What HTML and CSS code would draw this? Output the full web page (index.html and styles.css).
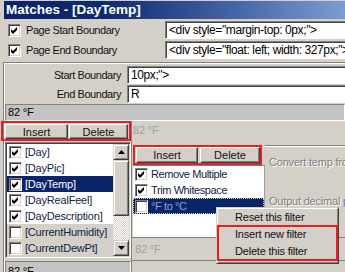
FILE: index.html
```html
<!doctype html>
<html lang="en">
  <head>
    <meta charset="utf-8" />
    <title>Matches - [DayTemp]</title>
    <link rel="stylesheet" href="styles.css">
  </head>
  <body>
    <div class="window">
      <div class="titlebar">Matches - [DayTemp]</div>

      <div class="page-rows">
        <div class="page-row">
          <span class="check"><svg width="9" height="9"><polygon points="1,3 3,5 7,1 7,4 3,8 1,6"/></svg></span>
          <span class="page-label">Page Start Boundary</span>
          <div class="field">&lt;div style="margin-top: 0px;"&gt;</div>
        </div>
        <div class="page-row">
          <span class="check"><svg width="9" height="9"><polygon points="1,3 3,5 7,1 7,4 3,8 1,6"/></svg></span>
          <span class="page-label">Page End Boundary</span>
          <div class="field">&lt;div style="float: left; width: 327px;"&gt;</div>
        </div>
      </div>

      <div class="panel">
        <div class="bound-row">
          <span class="bound-label">Start Boundary</span>
          <div class="field">10px;"&gt;</div>
        </div>
        <div class="bound-row">
          <span class="bound-label">End Boundary</span>
          <div class="field">R</div>
        </div>
        <div class="status">82 °F</div>

        <div class="lower">
          <div class="matches-col">
            <div class="btn-row mark">
              <button class="btn btn-insert">Insert</button>
              <button class="btn btn-delete">Delete</button>
            </div>
            <div class="listbox">
              <div class="list-items">
                <div class="list-row"><span class="check"><svg width="9" height="9"><polygon points="1,3 3,5 7,1 7,4 3,8 1,6"/></svg></span>[Day]</div>
                <div class="list-row"><span class="check"><svg width="9" height="9"><polygon points="1,3 3,5 7,1 7,4 3,8 1,6"/></svg></span>[DayPic]</div>
                <div class="list-row selected"><span class="check"><svg width="9" height="9"><polygon points="1,3 3,5 7,1 7,4 3,8 1,6"/></svg></span>[DayTemp]</div>
                <div class="list-row"><span class="check"><svg width="9" height="9"><polygon points="1,3 3,5 7,1 7,4 3,8 1,6"/></svg></span>[DayRealFeel]</div>
                <div class="list-row"><span class="check"><svg width="9" height="9"><polygon points="1,3 3,5 7,1 7,4 3,8 1,6"/></svg></span>[DayDescription]</div>
                <div class="list-row off"><span class="check"></span>[CurrentHumidity]</div>
                <div class="list-row off"><span class="check"></span>[CurrentDewPt]</div>
              </div>
              <div class="scrollbar">
                <div class="sb-btn"><svg width="7" height="4"><polygon points="3.5,0 7,4 0,4"/></svg></div>
                <div class="sb-thumb"></div>
                <div class="sb-track"></div>
                <div class="sb-btn"><svg width="7" height="4"><polygon points="0,0 7,0 3.5,4"/></svg></div>
              </div>
            </div>
            <div class="status status-low">82 °F</div>
          </div>

          <div class="filters-col">
            <div class="value">82 °F</div>
            <div class="filter-main">
              <div class="filter-left">
                <div class="btn-row mark">
                  <button class="btn btn-insert2">Insert</button>
                  <button class="btn btn-delete2">Delete</button>
                </div>
                <div class="filter-list">
                  <div class="list-row"><span class="check"><svg width="9" height="9"><polygon points="1,3 3,5 7,1 7,4 3,8 1,6"/></svg></span>Remove Multiple</div>
                  <div class="list-row"><span class="check"><svg width="9" height="9"><polygon points="1,3 3,5 7,1 7,4 3,8 1,6"/></svg></span>Trim Whitespace</div>
                  <div class="list-row selected focus"><span class="check"></span>°F to °C</div>
                </div>
              </div>
              <div class="filter-opts">
                <div class="opt">Convert temp from °F to °C</div>
                <div class="opt">Output decimal places</div>
              </div>
            </div>
            <div class="value value-low">82 °F</div>
          </div>
        </div>
      </div>

      <div class="menu">
        <div class="menu-item">Reset this filter</div>
        <div class="menu-mark">
          <div class="menu-item">Insert new filter</div>
          <div class="menu-item">Delete this filter</div>
        </div>
      </div>
    </div>
  </body>
</html>
```

FILE: styles.css
```css
html,
body {
  margin: 0;
  padding: 0;
}
body {
  background: #d4d0c8;
  font-family: 'Liberation Sans', Arial, sans-serif;
  font-size: 11px;
  letter-spacing: -0.2px;
  color: #111;
}
.window {
  position: relative;
  width: 345px;
  height: 272px;
  overflow: hidden;
}
.titlebar {
  margin: 1px 0 0 4px;
  height: 18px;
  line-height: 18px;
  padding-left: 2px;
  background: linear-gradient(to right, #0a246a 0%, #0e2a70 30%, #4566a6 68%, #7c9dcf 100%);
  color: #fff;
  font-weight: bold;
  font-size: 13.5px;
  letter-spacing: 0;
  white-space: nowrap;
}

/* checkboxes */
.check {
  flex: none;
  width: 13px;
  height: 13px;
  box-sizing: border-box;
  background: #fff;
  border: 1px solid;
  border-color: #808080 #fff #fff #808080;
  box-shadow: inset 1px 1px #404040, inset -1px -1px #d4d0c8;
  padding: 1px;
  display: flex;
}
.check svg {
  display: block;
  fill: #000;
}

/* text fields */
.field {
  flex: none;
  width: 180px;
  height: 18px;
  box-sizing: border-box;
  background: #fff;
  border: 1px solid;
  border-color: #808080 #fff #fff #808080;
  border-right: 0;
  box-shadow: inset 1px 1px #404040;
  padding-left: 3px;
  line-height: 16px;
  font-size: 12px;
  letter-spacing: -0.4px;
  color: #000;
  white-space: nowrap;
  overflow: hidden;
}

.page-rows {
  display: flex;
  flex-direction: column;
  gap: 2px;
  margin-top: 2px;
}
.page-row {
  display: flex;
  align-items: center;
  height: 18px;
  padding-left: 8px;
}
.page-label {
  flex: none;
  width: 139px;
  margin-left: 5px;
  letter-spacing: -0.45px;
  white-space: nowrap;
}

.panel {
  margin: 3px 0 0 3px;
  padding: 3px 0 0 1px;
  border-top: 1px solid #808080;
  border-left: 1px solid #808080;
  box-shadow: inset 1px 1px #fff;
  height: 300px;
}
.bound-row {
  display: flex;
  align-items: center;
  height: 18px;
  margin-bottom: 1px;
}
.bound-label {
  flex: none;
  width: 116px;
  margin-right: 6px;
  text-align: right;
  letter-spacing: -0.45px;
  white-space: nowrap;
}
.bound-row .field {
  width: 218px;
}

.status {
  margin-top: 1px;
  height: 17px;
  box-sizing: border-box;
  background: #c3c3c3;
  border: 1px solid;
  border-color: #808080 #fff #fff #808080;
  padding-left: 2px;
  line-height: 15px;
  color: #000;
}

.lower {
  display: flex;
}
.matches-col {
  flex: none;
  width: 126px;
}
.filters-col {
  flex: 1;
  min-width: 0;
  border-left: 1px solid #808080;
}

/* highlighted button rows */
.btn-row {
  display: flex;
  box-sizing: border-box;
}
.mark {
  border: 2px solid #ea1c24;
}
.matches-col .btn-row {
  margin: 0 0 0 -4px;
  width: 130px;
  height: 20px;
  padding: 1px 0 0 2px;
  gap: 1px;
}
.filter-left .btn-row {
  margin: 2px 0 0 1px;
  width: 129px;
  height: 20px;
  padding: 0 0 0 1px;
  gap: 2px;
}
.btn {
  height: 15px;
  padding: 0;
  box-sizing: border-box;
  background: #d4d0c8;
  border: 1px solid;
  border-color: #fff #404040 #404040 #fff;
  box-shadow: inset -1px -1px #808080;
  font-family: 'Liberation Sans', Arial, sans-serif;
  font-size: 11px;
  color: #111;
  line-height: 12px;
}
.btn-insert {
  width: 63px;
}
.btn-delete {
  width: 59px;
}
.btn-insert2 {
  width: 62px;
  height: 16px;
}
.btn-delete2 {
  width: 60px;
  height: 16px;
}

/* lists */
.listbox {
  margin-top: 1px;
  display: flex;
  height: 116px;
  box-sizing: border-box;
  border: 1px solid;
  border-color: #808080 #fff #fff #808080;
  box-shadow: inset 1px 1px #404040, inset -1px -1px #d4d0c8;
  padding: 1px;
}
.list-items {
  flex: 1;
  background: #fff;
}
.list-row {
  display: flex;
  align-items: center;
  gap: 3px;
  height: 16px;
  padding-left: 2px;
  white-space: nowrap;
  color: #101c48;
}
.list-row.off {
  background: #d4d0c8;
}
.list-row.selected {
  background: #0a246a;
  color: #fff;
}
.list-row.focus {
  color: #98a2c6;
  outline: 1px dotted #d8d0a0;
  outline-offset: -1px;
}

.scrollbar {
  flex: none;
  width: 16px;
  display: flex;
  flex-direction: column;
}
.sb-btn,
.sb-thumb {
  box-sizing: border-box;
  background: #d4d0c8;
  border: 1px solid;
  border-color: #d4d0c8 #404040 #404040 #d4d0c8;
  box-shadow: inset 1px 1px #fff, inset -1px -1px #808080;
}
.sb-btn {
  height: 16px;
  display: flex;
  align-items: center;
  justify-content: center;
}
.sb-btn svg {
  display: block;
  fill: #000;
}
.sb-thumb {
  height: 56px;
}
.sb-track {
  flex: 1;
  background: repeating-conic-gradient(#fff 0 25%, #d4d0c8 0 50%) 0 0 / 2px 2px;
}

.status-low {
  margin-top: 3px;
  height: 20px;
  padding-top: 2px;
}

.value {
  height: 22px;
  padding: 2px 0 0 1px;
  box-sizing: border-box;
  line-height: 14px;
  color: #a0a0a0;
}
.value-low {
  height: 24px;
  padding: 4px 0 0 3px;
  border-top: 1px solid #808080;
  border-bottom: 1px solid #808080;
}

.filter-main {
  display: flex;
  height: 94px;
}
.filter-left {
  flex: none;
  width: 133px;
  display: flex;
  flex-direction: column;
}
.filter-list {
  flex: 1;
  margin-left: 1px;
  background: #fff;
  border-top: 1px solid #808080;
  border-right: 1px solid #a0a0a0;
}
.filter-list .list-row {
  padding-left: 2px;
  letter-spacing: -0.4px;
}
.filter-opts {
  flex: 1;
  min-width: 0;
  margin-top: 2px;
  border-top: 1px solid #808080;
  box-shadow: inset 0 1px #fff;
  padding: 9px 0 0 4px;
  display: flex;
  flex-direction: column;
  gap: 25px;
}
.opt {
  line-height: 14px;
  white-space: nowrap;
  color: #808080;
  text-shadow: 1px 1px #fff;
}

/* context menu */
.menu {
  position: absolute;
  left: 216px;
  top: 207px;
  width: 123px;
  box-sizing: border-box;
  background: #d4d0c8;
  border: 1px solid;
  border-color: #d4d0c8 #404040 #404040 #d4d0c8;
  box-shadow: inset 1px 1px #fff, inset -1px -1px #808080;
  padding: 1px 1px 3px;
}
.menu-item {
  height: 17px;
  line-height: 17px;
  padding-left: 17px;
  white-space: nowrap;
  color: #111;
}
.menu-mark {
  outline: 2px solid #ea1c24;
  outline-offset: -1px;
}
```
